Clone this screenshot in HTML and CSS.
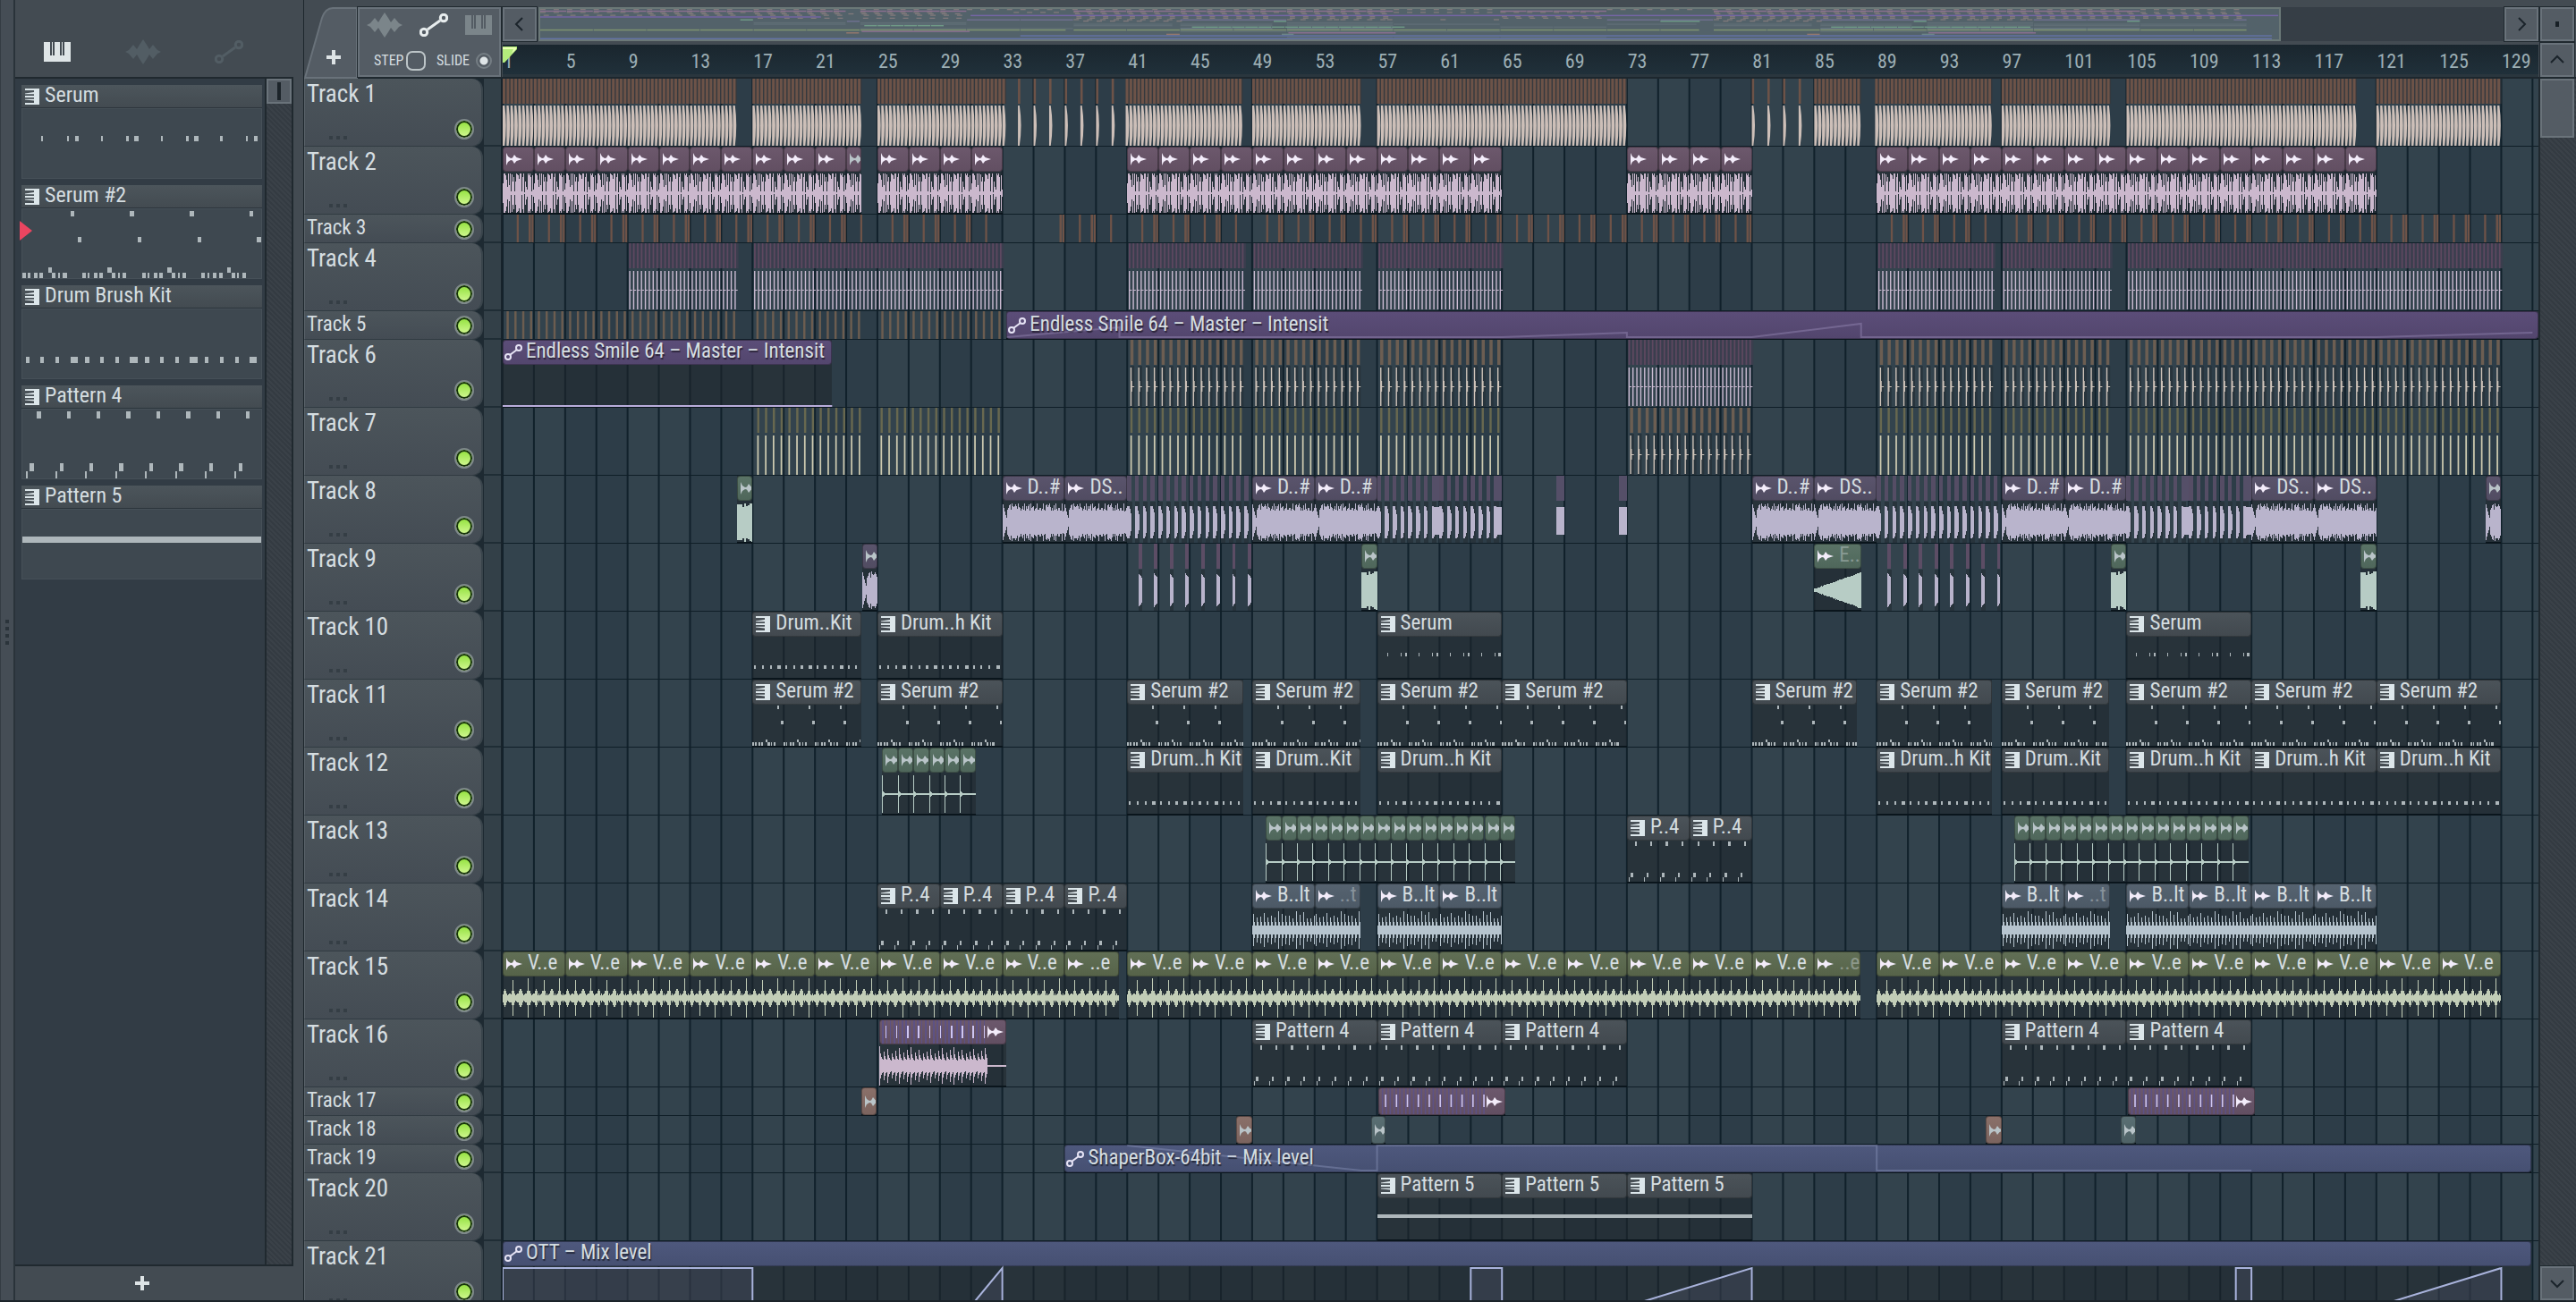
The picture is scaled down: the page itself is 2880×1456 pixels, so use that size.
FILE: index.html
```html
<!DOCTYPE html>
<html lang="en">

<head>
    <meta charset="UTF-8">
    <meta name="viewport" content="width=device-width, initial-scale=1.0">
    <title>Playlist</title>
    <link rel="stylesheet" href="styles.css">
</head>

<body>
    <!-- shared icons -->
    <svg class="defs" aria-hidden="true">
        <symbol id="i-keys" viewBox="0 0 30 22">
            <path d="M0 0h7v15h2V0h1v15h2V0h6v15h2V0h1v15h2V0h7v22H0z" />
        </symbol>
        <symbol id="i-wave" viewBox="0 0 40 28">
            <path d="M0 14l4-2 5-6 4 5 3-5 4-6 4 6 3 5 4-5 5 6 4 2-4 2-5 6-4-5-3 5-4 6-4-6-3-5-4 5-5-6z" />
        </symbol>
        <symbol id="i-auto" viewBox="0 0 32 26">
            <g fill="none" stroke="currentColor" stroke-width="3">
                <circle cx="5" cy="21" r="3.7" />
                <circle cx="27" cy="5" r="3.7" />
                <path d="M9 18L23 8" />
            </g>
        </symbol>
        <symbol id="i-pattern" viewBox="0 0 16 18">
            <path d="M0 0h16v18H0v-2h10v-2.500L0 12.500v-.8h10v-1.700H0V8h10V6.300H0v-.8L10 4V2H0z" />
        </symbol>
        <symbol id="i-audio" viewBox="0 0 18 14">
            <path d="M0 0l2 4 3 2 2-.5L9 2l2.500 3 6.500 2-6.500 2L9 12 7 8.500 5 8l-3 2-2 4z" />
        </symbol>
        <symbol id="i-env" viewBox="0 0 20 18">
            <g fill="none" stroke="currentColor" stroke-width="2">
                <circle cx="4" cy="14" r="3" />
                <circle cx="16" cy="4" r="3" />
                <path d="M6 12l8-6" />
            </g>
        </symbol>
    </svg>

    <div class="app">
        <div class="grip"><i></i><i></i><i></i><i></i></div>

        <aside class="picker">
            <div class="picker-tabs">
                <button class="on" aria-label="Patterns"><svg class="keys"><use href="#i-keys" /></svg></button>
                <button aria-label="Audio clips"><svg class="wave"><use href="#i-wave" /></svg></button>
                <button aria-label="Automation clips"><svg class="auto"><use href="#i-auto" /></svg></button>
            </div>
            <div class="picker-main">
                <ul class="picker-list" id="picker"></ul>
                <div class="picker-scroll">
                    <div class="thumb"></div>
                </div>
            </div>
            <button class="picker-add" aria-label="Add pattern"><svg class="plus" viewBox="0 0 16 16"><path d="M6 0h4v6h6v4h-6v6H6v-6H0V6h6z" /></svg></button>
        </aside>

        <main class="playlist">
            <div class="top">
                <button class="tab-add" aria-label="Add track">
                    <svg class="tab-shape" viewBox="0 0 60 80"><path d="M1 79L20 12Q24 1 32 1H59V79z" /></svg>
                    <svg class="plus" viewBox="0 0 16 16"><path d="M6 0h4v6h6v4h-6v6H6v-6H0V6h6z" /></svg>
                </button>
                <div class="tools">
                    <div class="tool-icons">
                        <button aria-label="Audio"><svg class="wave"><use href="#i-wave" /></svg></button>
                        <button class="on" aria-label="Automation"><svg class="auto"><use href="#i-auto" /></svg></button>
                        <button aria-label="Patterns"><svg class="keys"><use href="#i-keys" /></svg></button>
                    </div>
                    <div class="tool-opts">
                        <label>STEP<input type="checkbox" class="step"></label>
                        <label>SLIDE<input type="radio" class="slide" checked></label>
                    </div>
                </div>
                <div class="time">
                    <div class="hscroll">
                        <button class="box" aria-label="Scroll left"><svg viewBox="0 0 16 16"><path d="M11 1L4 8l7 7" /></svg></button>
                        <div class="overview"><svg id="overview" preserveAspectRatio="none"></svg></div>
                        <button class="box" aria-label="Scroll right"><svg viewBox="0 0 16 16"><path d="M5 1l7 7-7 7" /></svg></button>
                    </div>
                    <div class="ruler" id="ruler"></div>
                </div>
                <div class="corner">
                    <button class="box" aria-label="Menu"><span class="dot"></span></button>
                    <button class="box" aria-label="Scroll up"><svg viewBox="0 0 16 16"><path d="M1 11l7-7 7 7" /></svg></button>
                </div>
            </div>
            <div class="body">
                <div class="heads" id="heads"></div>
                <div class="stub" id="stub"></div>
                <div class="lanes" id="lanes"></div>
                <div class="vscroll">
                    <div class="thumb"></div>
                    <button class="box" aria-label="Scroll down"><svg viewBox="0 0 16 16"><path d="M1 5l7 7 7-7" /></svg></button>
                </div>
            </div>
        </main>
    </div>

    <script src="playlist.js"></script>
</body>

</html>
```

FILE: styles.css
```css
* {
    box-sizing: border-box;
}

body {
    margin: 0;
    height: 100vh;
    overflow: hidden;
    background-color: #434b52;
    color: #d5dde0;
    font-family: "Roboto Condensed", "Open Sans Condensed", "Liberation Sans Narrow", "Liberation Sans", sans-serif;
    font-size: 24px;
}

button {
    padding: 0;
    border: 0;
    background: none;
    color: inherit;
    font: inherit;
    cursor: pointer;
}

svg {
    display: block;
    fill: currentColor;
}

.defs {
    position: absolute;
    width: 0;
    height: 0;
}

.app {
    display: flex;
    height: 100vh;
    overflow: hidden;
    border-bottom: 2px solid #1b2329;
}

.keys {
    width: 30px;
    height: 22px;
}

.wave {
    width: 40px;
    height: 28px;
}

.auto {
    width: 32px;
    height: 26px;
}

.plus {
    width: 16px;
    height: 16px;
    color: #dde3e5;
}

/* left edge */
.grip {
    flex: none;
    width: 17px;
    display: flex;
    flex-direction: column;
    justify-content: center;
    align-items: center;
    gap: 4px;
    padding-bottom: 40px;
    background-color: #454d55;
    border-left: 1px solid #343c43;
    border-right: 2px solid #2a333a;
}

.grip i {
    width: 4px;
    height: 4px;
    background-color: #2b343b;
}

/* pattern picker */
.picker {
    flex: none;
    width: 311px;
    display: flex;
    flex-direction: column;
    background-color: #434b52;
}

.picker-tabs {
    flex: none;
    height: 86px;
    padding: 29px 56px 0 32px;
    display: flex;
    justify-content: space-between;
    align-items: center;
    color: #525d64;
}

.picker-tabs .on {
    color: #dfe5e7;
}

.picker-main {
    flex: 1;
    min-height: 0;
    display: flex;
    border-top: 2px solid #20292f;
    border-right: 2px solid #20292f;
}

.picker-list {
    flex: 1;
    margin: 0;
    padding: 7px 3px 0 7px;
    list-style: none;
    background-color: #323c45;
    border-right: 2px solid #20292f;
}

.picker-item {
    margin-bottom: 7px;
    position: relative;
}

.picker-item header {
    height: 26px;
    padding-left: 4px;
    display: flex;
    align-items: center;
    gap: 6px;
    line-height: 22px;
    background: linear-gradient(#4c555b, #434b51);
    border-bottom: 1px solid #2c353c;
}

.picker-item header span {
    padding-bottom: 4px;
}

.picker-item .notes {
    width: 100%;
    height: 79px;
    background-color: #3e4850;
    border: 1px solid #465058;
}

.picked::before {
    content: "";
    position: absolute;
    left: -2px;
    top: 40px;
    width: 14px;
    height: 22px;
    background-color: #ea4560;
    clip-path: polygon(0 0, 100% 50%, 0 100%);
}

.i-pattern {
    flex: none;
    width: 16px;
    height: 18px;
    color: #dce6ea;
}

.picker-scroll {
    width: 28px;
    background: repeating-linear-gradient(45deg, #3a4148 0 2px, #343b42 2px 4px);
}

.thumb {
    display: flex;
    justify-content: center;
    align-items: center;
    background-color: #545c64;
    border: 2px solid #6a737a;
}

.picker-scroll .thumb {
    height: 28px;
}

.picker-scroll .thumb::before {
    content: "";
    width: 4px;
    height: 20px;
    background-color: #1c242a;
}

.picker-add {
    flex: none;
    height: 40px;
    padding-right: 28px;
    display: flex;
    justify-content: center;
    align-items: center;
    border-top: 2px solid #20292f;
}

/* playlist */
.playlist {
    flex: 1;
    min-width: 0;
    margin-left: 11px;
    display: flex;
    flex-direction: column;
    border-left: 1px solid #1d262c;
}

.top {
    flex: none;
    height: 88px;
    padding-top: 8px;
    display: flex;
    border-bottom: 2px solid #1d272e;
}

.tab-add {
    flex: none;
    width: 60px;
    height: 78px;
    display: grid;
    place-items: center;
}

.tab-add > * {
    grid-area: 1 / 1;
}

.tab-add .plus {
    margin: 32px 0 0 6px;
}

.tab-shape {
    width: 60px;
    height: 80px;
    fill: #545c64;
    stroke: #69727a;
    stroke-width: 2;
}

.tools {
    flex: none;
    width: 160px;
    padding: 3px 8px 0;
    background-color: #545c64;
    border: 2px solid #69727a;
    outline: 1px solid #20292f;
}

.tool-icons {
    height: 30px;
    display: flex;
    justify-content: space-between;
    align-items: center;
    color: #7b858a;
}

.tool-icons .on {
    color: #e8edee;
}

.tool-opts {
    margin-top: 13px;
    padding-left: 8px;
    display: flex;
    justify-content: space-between;
    font-size: 16px;
    line-height: 24px;
}

.tool-opts label {
    display: flex;
    align-items: center;
    gap: 3px;
}

.tool-opts input {
    appearance: none;
    margin: 0;
    width: 22px;
    height: 22px;
}

.tool-opts .step {
    border: 2px solid #bcc4c7;
    border-radius: 7px;
}

.tool-opts .slide {
    width: 18px;
    height: 18px;
    margin-left: 4px;
    border: 2px solid #757e84;
    border-radius: 50%;
    background: radial-gradient(#dfe5e7 0 4px, transparent 5px);
}

.time {
    flex: 1;
    min-width: 0;
    margin-left: 2px;
}

.hscroll {
    height: 38px;
    display: flex;
    gap: 2px;
    background-color: #363e46;
}

.box {
    flex: none;
    width: 38px;
    height: 38px;
    display: flex;
    justify-content: center;
    align-items: center;
    background-color: #545c64;
    border: 2px solid #69727a;
    outline: 1px solid #20292f;
}

.box svg {
    width: 16px;
    height: 16px;
    fill: none;
    stroke: #1b242b;
    stroke-width: 2;
}

.dot {
    width: 4px;
    height: 6px;
    background-color: #182026;
}

.overview {
    flex: 1;
}

.overview svg {
    width: 88.7%;
    height: 38px;
    background-color: #53626a;
    border: 2px solid #6b7877;
}

.ruler {
    position: relative;
    margin-top: 4px;
    height: 36px;
    display: flex;
    background: linear-gradient(#1a262e, #20303a);
    border-bottom: 3px solid #2a363e;
    color: #9caeb4;
    font-size: 22px;
    line-height: 37px;
    white-space: nowrap;
}

.ruler span {
    flex: none;
    padding-left: 1px;
}

.marker {
    position: absolute;
    left: 0;
    top: 2px;
    width: 16px;
    height: 18px;
    color: #b3ec7c;
}

.corner {
    flex: none;
    width: 42px;
    padding-left: 2px;
    display: flex;
    flex-direction: column;
    gap: 2px;
}

.body {
    flex: 1;
    min-height: 0;
    display: flex;
}

.heads {
    flex: none;
    width: 200px;
    background-color: #1e2a32;
}

.head {
    height: 76px;
    padding-left: 2px;
    position: relative;
    background: linear-gradient(#4c555b, #444c54);
    border-radius: 0 12px 12px 0;
    border-left: 1px solid #5a636a;
    border-bottom: 1px solid #313b42;
    border-right: 2px solid #39444b;
    font-size: 27px;
    line-height: 34px;
}

.head.small {
    height: 32px;
    font-size: 23px;
    line-height: 30px;
}

.led {
    appearance: none;
    position: absolute;
    right: 8px;
    bottom: 7px;
    margin: 0;
    width: 22px;
    height: 23px;
    border: 2px solid #7e888a;
    border-radius: 50%;
    background: linear-gradient(#8fe03a, #d5f996);
    box-shadow: inset 0 0 0 2px #17330c;
}

.small .led {
    bottom: 3px;
}

.more {
    position: absolute;
    left: 27px;
    bottom: 7px;
    display: flex;
    gap: 4px;
}

.more i {
    width: 4px;
    height: 4px;
    background-color: #353e45;
}

.stub {
    flex: none;
    width: 22px;
    background-color: #334048;
    border-right: 2px solid #17232b;
    border-left: 1px solid #1e2a32;
}

.stub div {
    height: 76px;
    border-bottom: 2px solid #1f2d35;
}

.stub .small {
    height: 32px;
}

.lanes {
    flex: 1;
    min-width: 0;
    position: relative;
}

.vscroll {
    flex: none;
    width: 42px;
    padding-right: 2px;
    display: flex;
    flex-direction: column;
    justify-content: space-between;
    background: repeating-linear-gradient(45deg, #3a4148 0 2px, #343b42 2px 4px);
    border-left: 2px solid #20292f;
}

.vscroll .thumb {
    height: 66px;
}

.grid {
    position: absolute;
    inset: 0;
    width: 100%;
    height: 100%;
    background-color: #33434d;
}

.grid .dark {
    fill: #2d3d48;
}

.grid .lines {
    stroke: #11212b;
    stroke-width: 2px;
}

.lane {
    position: relative;
    height: 76px;
    border-bottom: 1px solid #0f1e27;
}

.lane.small {
    height: 32px;
}

.draw {
    position: absolute;
    left: 0;
    top: 0;
    width: 100%;
    height: 76px;
    pointer-events: none;
}

.draw .crisp {
    shape-rendering: crispEdges;
}

.small .draw {
    height: 32px;
}

/* clips on the timeline */
.clip {
    position: absolute;
    top: 0;
    height: 76px;
    background-color: rgba(31, 38, 43, 0.55);
    border-bottom: 2px solid #0a151c;
}

.small .clip {
    height: 32px;
}

.clip header {
    height: 28px;
    padding-left: 3px;
    display: flex;
    align-items: center;
    gap: 6px;
    font-size: 23px;
    line-height: 24px;
    white-space: nowrap;
    background: linear-gradient(#4b5359, #42494f);
    border: 1px solid rgba(0, 0, 0, 0.3);
    border-radius: 4px;
}

.clip header span {
    padding-bottom: 2px;
}

.small .clip header {
    height: 31px;
}

.clip .i-audio {
    flex: none;
    width: 18px;
    height: 14px;
    color: #f3ecfa;
}

.clip .i-env {
    flex: none;
    width: 20px;
    height: 18px;
    color: #e6e3f5;
}

.clip .notes {
    width: 100%;
    height: 46px;
}

.notes {
    display: block;
    fill: #aeb7bb;
    shape-rendering: crispEdges;
}

.clip.pink header {
    background: linear-gradient(#6c586c, #624f62);
}

.clip.lav header {
    background: linear-gradient(#5a546c, #514c62);
}

.clip.green header {
    background: linear-gradient(#5a7366, #4f675b);
}

.clip.steel header {
    background: linear-gradient(#566370, #4c5966);
}

.clip.olive header {
    background: linear-gradient(#616f56, #566349);
}

.clip.rust header {
    background: linear-gradient(#8a7069, #7b645f);
}

.clip.teal header {
    background: linear-gradient(#5a6f73, #4f6266);
}

.clip.violet header,
.clip.blue header {
    padding-left: 1px;
    gap: 4px;
    text-shadow: 1px 2px 1px rgba(0, 0, 0, 0.5);
}

.clip.violet header {
    background: linear-gradient(#5b4d78, #53466e);
}

.clip.blue header {
    background: linear-gradient(#4e587d, #465072);
}

/* clips of one bar or less have room for part of the icon only */
.clip.tiny header,
.clip.cut header {
    overflow: hidden;
}

.clip.tiny .i-audio,
.clip.cut .i-audio {
    color: #b9c4c8;
}

.clip.faded span {
    opacity: 0.4;
}

.clip.roll header {
    padding-right: 2px;
    justify-content: flex-end;
}
```

FILE: playlist.js
```js
const BARS = 130.38; // bars that fit in the lanes
const PX = 17.457; // columns per bar in the waveforms

// notes of each pattern: [repeat, [x, y, w, h]...], x in bars, y as a share of the height
const patterns = {
    'Serum': [2, [.63, .39, .07, .08], [1.49, .39, .07, .08], [1.76, .39, .13, .08]],
    'Serum #2': [2, [1.61, .02, .13, .08], [1.86, .4, .13, .08],
        [0, .92, .12, .08], [.19, .92, .07, .08], [.39, .92, .12, .08], [.58, .92, .12, .08],
        [.86, .84, .13, .08], [1, .92, .12, .08], [1.2, .92, .06, .08], [1.36, .92, .13, .08]],
    'Drum Brush Kit': [2, [.11, .69, .13, .09], [.61, .69, .12, .09], [1.12, .69, .12, .09], [1.61, .69, .25, .09]],
    'Pattern 4': [1, [.49, .02, .13, .11], [.25, .78, .13, .11], [.11, .89, .06, .11]],
    'Pattern 5': [8, [0, .39, 8, .09]]
};

// clips: [start, end, kind, label, extra classes, pattern]
const S = 'Serum', S2 = 'Serum #2', D = 'Drum Brush Kit', P4 = 'Pattern 4', P5 = 'Pattern 5';

function row(kind, starts, len, label, extra) {
    return starts.map(s => [s, s + len, kind, label || '', extra || '']);
}

function every(from, to, step) {
    const out = [];
    for (let x = from; x < to - .01; x += step) out.push(x);
    return out;
}

const tracks = [
    { hits: [['kick', [[0, 14.9], [16, 22.9], [24, 32.2], [39.9, 47.4], [48, 54.9], [56, 71.9], [84, 86.9], [87.9, 95.3], [96, 102.9], [104, 118.8], [120, 127.9]]],
        ['kick1', [[33, 39.5], [80, 83.5]]]] },
    { clips: [...row('pink', every(0, 22, 2), 2), [22, 22.95, 'pink', '', 'cut'], ...row('pink', every(24, 32, 2), 2),
        ...row('pink', every(40, 64, 2), 2), ...row('pink', every(72, 80, 2), 2), ...row('pink', every(88, 120, 2), 2)], wave: 'chop' },
    { small: true, hits: [['clap', [[0, 23], [24, 31], [35.5, 39], [40, 47], [48, 80], [88, 95], [96, 128]]]] },
    { hits: [['hat', [[8.1, 15], [16.1, 32], [40.1, 47.5], [48.1, 55], [56.1, 64], [88.1, 95.4], [96.1, 103], [104.1, 128]]]] },
    { small: true, hits: [['shaker', [[.25, 15], [16.25, 23], [24.25, 32]]]],
        clips: [[32.27, BARS, 'violet', 'Endless Smile 64 – Master – Intensit']],
        env: [[32.3, 29], [39.5, 18], [39.5, 29], [64, 29], [72, 24], [72, 29], [80, 29], [87, 14], [87, 29], [120, 29], [130, 24]] },
    { hits: [['tan', [[40.2, 47.5], [48.2, 55], [56.2, 64], [88.2, 95.3], [96.2, 103], [104.2, 128]]], ['hat', [[72.1, 80]]]],
        clips: [[0, 21.1, 'violet', 'Endless Smile 64 – Master – Intensit']], env: [[0, 74], [21.1, 74]] },
    { hits: [['straw', [[16.3, 23], [24.2, 32], [40.2, 47.5], [48.2, 55], [56.2, 64], [88.2, 95.3], [96.2, 103], [104.2, 128]]], ['tan', [[72.2, 80]]]] },
    { clips: [[15, 16, 'green', '', 'tiny'], [32, 36, 'lav', 'D..#'], [36, 40, 'lav', 'DS..'], [48, 52, 'lav', 'D..#'], [52, 56, 'lav', 'D..#'],
        [80, 84, 'lav', 'D..#'], [84, 88, 'lav', 'DS..'], [96, 100, 'lav', 'D..#'], [100, 104, 'lav', 'D..#'],
        [112, 116, 'lav', 'DS..'], [116, 120, 'lav', 'DS..'], [127, 128, 'lav', '', 'tiny']],
        wave: 'bass',
        hits: [['slice', [[40, 48], [56, 64], [88, 96], [104, 112]]],
            ['wide', [[59.5, 60], [63.5, 64], [67.5, 68], [71.5, 72], [107.5, 108], [111.5, 112]]]] },
    { clips: [[23, 24, 'lav', '', 'tiny'], [55, 56, 'green', '', 'tiny'], [84, 87, 'green', 'E..', 'faded'],
        [103, 104, 'green', '', 'tiny'], [119, 120, 'green', '', 'tiny']], wave: 'bass',
        hits: [['slice1', [[40.72, 48], [88.7, 96]]]] },
    { clips: [[16, 22.95, 'pattern', 'Drum..Kit', '', D], [24, 32, 'pattern', 'Drum..h Kit', '', D],
        [56, 64, 'pattern', 'Serum', '', S], [104, 112, 'pattern', 'Serum', '', S]] },
    { clips: [[16, 22.95], [24, 32], [40, 47.45], [48, 54.95], [56, 64], [64, 72], [80, 86.75], [88, 95.4], [96, 102.9],
        [104, 112], [112, 120], [120, 128]].map(c => [...c, 'pattern', 'Serum #2', '', S2]) },
    { clips: [...row('green', every(24.3, 30.3, 1), 1, '', 'tiny'),
        ...[[40, 47.45, 'h Kit'], [48, 54.95, 'Kit'], [56, 64, 'h Kit'], [88, 95.4, 'h Kit'], [96, 102.9, 'Kit'], [104, 112, 'h Kit'],
            [112, 120, 'h Kit'], [120, 128, 'h Kit']].map(c => [c[0], c[1], 'pattern', 'Drum..' + c[2], '', D])], wave: 'ping' },
    { clips: [...row('green', every(48.87, 64.87, 1), 1, '', 'tiny'), [72, 76, 'pattern', 'P..4', '', P4], [76, 80, 'pattern', 'P..4', '', P4],
        ...row('green', every(96.8, 111.8, 1), 1, '', 'tiny')], wave: 'ping' },
    { clips: [...every(24, 40, 4).map(s => [s, s + 4, 'pattern', 'P..4', '', P4]),
        ...row('steel', [48, 56, 60, 96, 104, 108, 112, 116], 4, 'B..lt'),
        [52, 54.95, 'steel', '..t', 'faded'], [100, 102.95, 'steel', '..t', 'faded']], wave: 'beat' },
    { clips: [...row('olive', every(0, 36, 4), 4, 'V..e'), [36, 39.45, 'olive', '..e'], ...row('olive', every(40, 84, 4), 4, 'V..e'),
        [84, 86.95, 'olive', '..e', 'faded'], ...row('olive', every(88, 128, 4), 4, 'V..e')], wave: 'loop' },
    { clips: [[24.1, 32.25, 'pink', '', 'roll'], ...[48, 56, 64, 96, 104].map(s => [s, s + 8, 'pattern', 'Pattern 4', '', P4])], wave: 'roll' },
    { small: true, clips: [[22.95, 23.95, 'rust', '', 'tiny'], [56.1, 64.2, 'pink', '', 'roll'], [104.1, 112.2, 'pink', '', 'roll']] },
    { small: true, clips: [[46.95, 48, 'rust', '', 'tiny'], [55.6, 56.55, 'teal', '', 'tiny'], [95, 96, 'rust', '', 'tiny'], [103.6, 104.6, 'teal', '', 'tiny']] },
    { small: true, clips: [[36, 129.9, 'blue', 'ShaperBox-64bit – Mix level']],
        env: [[40, 1], [55, 29], [56, 29], [56, 1], [88, 1], [88, 29], [112, 29]] },
    { clips: [56, 64, 72].map(s => [s, s + 8, 'pattern', 'Pattern 5', '', P5]) },
    { clips: [[0, 129.9, 'blue', 'OTT – Mix level']],
        env: [[0, 80], [0, 30], [16, 30], [16, 80], [29.6, 80], [30.3, 66], [32, 30], [32, 80], [62, 80], [62, 30], [64, 30], [64, 80],
            [70.7, 80], [80, 30], [80, 80], [111, 80], [111, 30], [112, 30], [112, 80], [118.7, 80], [128, 30], [128, 80]] }
];

const colours = {
    pink: '#cbb8cd', lav: '#b9b4cc', green: '#b7ccc5', steel: '#b6c4ce', olive: '#c2cdb7',
    violet: '#b9addb', blue: '#a9b3dc'
};

const overviewColours = {
    pink: '#8a6f90', lav: '#6f7090', green: '#6f9a86', steel: '#6a7a86', olive: '#7f9470', pattern: '#5f6d75',
    violet: '#7565a5', blue: '#6473a5', rust: '#94786c', teal: '#6c8688'
};

function noise(n) {
    const s = Math.sin(n * 127.1 + 11.7) * 43758.5453;
    return s - Math.floor(s);
}

function rect(x, y, w, h) {
    return `M${x.toFixed(3)} ${y.toFixed(1)}h${w.toFixed(3)}v${h.toFixed(1)}h${(-w).toFixed(3)}z`;
}

// stepped outline, one column per pixel, mirrored round the middle of the clip body
function columns(from, to, amp) {
    let top = '', bottom = '';
    const n = Math.round((to - from) * PX);
    for (let i = 0; i < n; i++) {
        const a = Math.max(.03, amp(i / PX, i)) * 22;
        const end = i == n - 1 ? to : from + (i + 1) / PX;
        top += `V${(52 - a).toFixed(1)}H${end.toFixed(4)}`;
        bottom = `V${(52 + a).toFixed(1)}H${(from + i / PX).toFixed(4)}` + bottom;
    }
    return `M${from.toFixed(4)} 52${top}${bottom}z`;
}

const chop = [.5, 1, 1, .9, .7, .3, 1, .4, 1, .1, .95, .6, .8, .1, .6, 1, .95, .9, .75, 1, 1, .1, .8, 1, .05, .6, .3, .2, 1, .9, 1, .8, .1, .9, .2];
const amps = {
    chop: (x, i) => chop[i % 35],
    bass: (x, i) => x < .25 ? .9 - x * 3 : (i % 7 == 3 ? .95 : .55 + .35 * noise(i % 70)),
    blob: (x, i) => .78 + .2 * noise(Math.floor(i / 2)),
    ping: (x, i) => i == 0 ? .95 : .3 * Math.exp(-x * 12),
    rise: (x, i) => .04 + x / 3 * .85 + .05 * noise(i),
    beat: (x, i) => i % 4 == 1 ? .55 + .4 * noise(i) : i % 4 == 2 ? .4 : .22,
    roll: x => x > 6.9 ? .02 : .25 + .75 * Math.exp(-(x % .25) * 12),
    loop: (x, i) => {
        const k = Math.floor(x / .5), d = x - k * .5 - .12;
        const peak = k % 4 == 3 ? 1 : k % 2 ? .92 : .45;
        return Math.abs(d) < .04 ? peak : Math.abs(d) < .1 ? .35 : .12 + .12 * noise(i % 9);
    }
};

const hits = {
    kick: (x, out) => {
        out('#35393e', rect(x, 0, .25, 28));
        out('#6d5348', rect(x, 0, .17, 28));
        out('#cdbfb8', `M${x} 30h.13q.17 22 0 45h-.13z`);
    },
    kick1: (x, out) => {
        out('#6d5348', rect(x, 0, .15, 28));
        out('#cdbfb8', `M${x} 30h.1q.2 22 0 45h-.1z`);
    },
    hat: (x, out) => {
        out('#3a3e4e', rect(x, 0, .25, 28));
        out('#5e4860', rect(x, 0, .1, 28));
        out('#cbbbd2', rect(x, 31, .08, 43) + rect(x, 52, .2, 1));
    },
    shaker: (x, out) => out('#6c5d50', rect(x, 0, .14, 31)),
    tan: (x, out) => {
        out('#6c5e52', rect(x, 0, .2, 28));
        out('#28343c', rect(x, 29, .25, 46));
        out('#cfc4ba', rect(x, 31, .08, 43) + rect(x, 46, .12, 12) + rect(x, 52, .25, 1));
    },
    straw: (x, out) => {
        out('#68684f', rect(x, 0, .14, 28));
        out('#cdcab0', rect(x, 31, .1, 44));
    },
    slice: (x, out) => {
        out('#554d65', rect(x, 0, .25, 28));
        out('#28343c', rect(x, 29, .3, 46));
        out('#b9b4cc', `M${x} 34h.14l.12 9v18l-.12 9h-.14z`);
    },
    wide: (x, out) => {
        out('#554f68', rect(x, 0, .5, 28));
        out('#b9b4cc', `M${x} 35h.5v31h-.5z`);
    },
    slice1: (x, out) => {
        out('#5c4d65', rect(x, 0, .22, 28));
        out('#28343c', rect(x, 29, .25, 46));
        out('#b9b4cc', `M${x} 33l.22 5v28l-.22 5z`);
    }
};
const steps = { kick: .25, kick1: 1, hat: .25, shaker: .5, tan: .5, straw: .5, slice: .5, wide: 1, slice1: 1 };

function notesSvg(name, length) {
    const [repeat, ...notes] = patterns[name];
    let d = '';
    for (let b = 0; b < length; b += repeat) {
        for (const [x, y, w, h] of notes) {
            if (b + x < length) d += `M${(b + x).toFixed(2)} ${y}h${Math.min(w, length - b - x).toFixed(2)}v${h}h-${Math.min(w, length - b - x).toFixed(2)}z`;
        }
    }
    return `<svg class="notes" viewBox="0 0 ${length} 1" preserveAspectRatio="none"><path d="${d}"/></svg>`;
}

function icon(name) {
    return `<svg class="${name}"><use href="#${name}"/></svg>`;
}

function clipHtml([from, to, kind, label, extra, pattern]) {
    const name = kind == 'pattern' ? 'i-pattern' : kind == 'violet' || kind == 'blue' ? 'i-env' : 'i-audio';
    return `<div class="clip ${kind} ${extra || ''}" style="left:${from / BARS * 100}%;width:${(to - from) / BARS * 100}%">` +
        `<header>${icon(name)}${label ? `<span>${label}</span>` : ''}</header>${pattern ? notesSvg(pattern, +(to - from).toFixed(2)) : ''}</div>`;
}

function drawTrack(track) {
    const paths = {};
    const out = (colour, d) => paths[colour] = (paths[colour] || '') + d;
    let extra = '';
    for (const [kind, ranges] of track.hits || []) {
        for (const [from, to] of ranges) {
            if (kind == 'clap') {
                // single hit, then the double that leads to the next bar
                const start = Math.floor(from / 2) * 2;
                for (let x = start; x < to; x += 2) {
                    if (x + .9 > from && x + .9 < to) out('#6e5348', rect(x + .9, 0, .13, 31));
                    if (x + 1.66 > from && x + 1.66 < to) out('#6e5348', rect(x + 1.66, 0, .15, 31) + rect(x + 1.85, 0, .13, 31));
                }
                continue;
            }
            for (let x = from; x < to - .05; x += steps[kind]) hits[kind](+x.toFixed(3), out);
        }
    }
    if (track.wave) {
        for (const [from, to, kind, label] of track.clips) {
            if (kind == 'pattern') continue;
            let fn = amps[track.wave];
            if (track.wave == 'bass' && kind == 'green') fn = label ? amps.rise : amps.blob;
            out(colours[kind], columns(from, to, fn));
        }
    }
    if (track.env) {
        const kind = track.clips[0][2];
        const pts = track.env.map(p => p.join(' ')).join('L');
        extra = `<path d="M${pts}" fill="${track.small ? 'none' : 'rgba(140,140,180,.15)'}" stroke="${colours[kind]}"` +
            ` stroke-opacity="${track.small ? .3 : 1}" stroke-width="2" vector-effect="non-scaling-stroke"/>`;
    }
    // stripes and ticks of the fast roll clips
    for (const c of track.clips || []) {
        if (c[4] != 'roll') continue;
        for (let x = c[0] + .2; x < c[0] + 6.9; x += .25) out('#5d5284', rect(x, 1, .09, track.small ? 29 : 26));
        for (let x = c[0] + .4; x < c[0] + 6.9; x += .7) out('#cfc6f2', rect(x, track.small ? 8 : 7, .09, 14));
    }
    const body = Object.entries(paths).map(([c, d]) => `<path fill="${c}" d="${d}"/>`).join('');
    return `<svg class="draw" viewBox="0 0 ${BARS} ${track.small ? 32 : 76}" preserveAspectRatio="none">` +
        `<g class="${track.wave ? 'crisp' : ''}">${body}</g>${extra}</svg>`;
}

function gridSvg() {
    let dark = '', lines = '';
    for (let b = 4; b < BARS; b += 8) dark += `M${b} 0h4v1h-4z`;
    for (let b = 0; b < BARS; b += 2) lines += `M${b} 0v1`;
    return `<svg class="grid" viewBox="0 0 ${BARS} 1" preserveAspectRatio="none"><path class="dark" d="${dark}"/>` +
        `<path class="lines" d="${lines}" vector-effect="non-scaling-stroke"/></svg>`;
}

function overview() {
    let html = '';
    tracks.forEach((t, i) => {
        for (const [from, to, kind] of t.clips || []) {
            html += `<rect x="${from}" y="${i + .1}" width="${to - from - .05}" height=".9" fill="${overviewColours[kind]}"/>`;
        }
        for (const [kind, ranges] of t.hits || []) {
            for (const [from, to] of ranges) {
                for (let x = from; x < to; x += 1) html += `<rect x="${x}" y="${i}" width=".4" height=".8" fill="#827a7c"/>`;
            }
        }
    });
    const svg = document.getElementById('overview');
    svg.setAttribute('viewBox', `0 0 ${BARS} 21`);
    svg.innerHTML = html;
}

document.getElementById('picker').innerHTML = Object.keys(patterns).map(name =>
    `<li class="picker-item ${name == 'Serum #2' ? 'picked' : ''}"><header>${icon('i-pattern')}<span>${name}</span></header>${notesSvg(name, 8)}</li>`).join('');

document.getElementById('ruler').innerHTML = every(1, 130, 4).map(n =>
    `<span style="flex-basis:${n < 129 ? 400 / BARS + '%' : 'auto'}">${n}</span>`).join('') +
    '<svg class="marker" viewBox="0 0 16 18"><path d="M0 0h16v3L2 18H0z"/><path d="M0 1h15v2L10 8l2-5H0z" fill="#eaffb5"/></svg>';

document.getElementById('heads').innerHTML = tracks.map((t, i) =>
    `<div class="head ${t.small ? 'small' : ''}"><label for="t${i + 1}">Track ${i + 1}</label>` +
    (t.small ? '' : '<div class="more"><i></i><i></i><i></i></div>') +
    `<input class="led" id="t${i + 1}" type="checkbox" checked></div>`).join('');

document.getElementById('stub').innerHTML = tracks.map(t => `<div class="${t.small ? 'small' : ''}"></div>`).join('');

document.getElementById('lanes').innerHTML = gridSvg() + tracks.map(t =>
    `<div class="lane ${t.small ? 'small' : ''}">${(t.clips || []).map(clipHtml).join('')}${drawTrack(t)}</div>`).join('');

overview();
```
